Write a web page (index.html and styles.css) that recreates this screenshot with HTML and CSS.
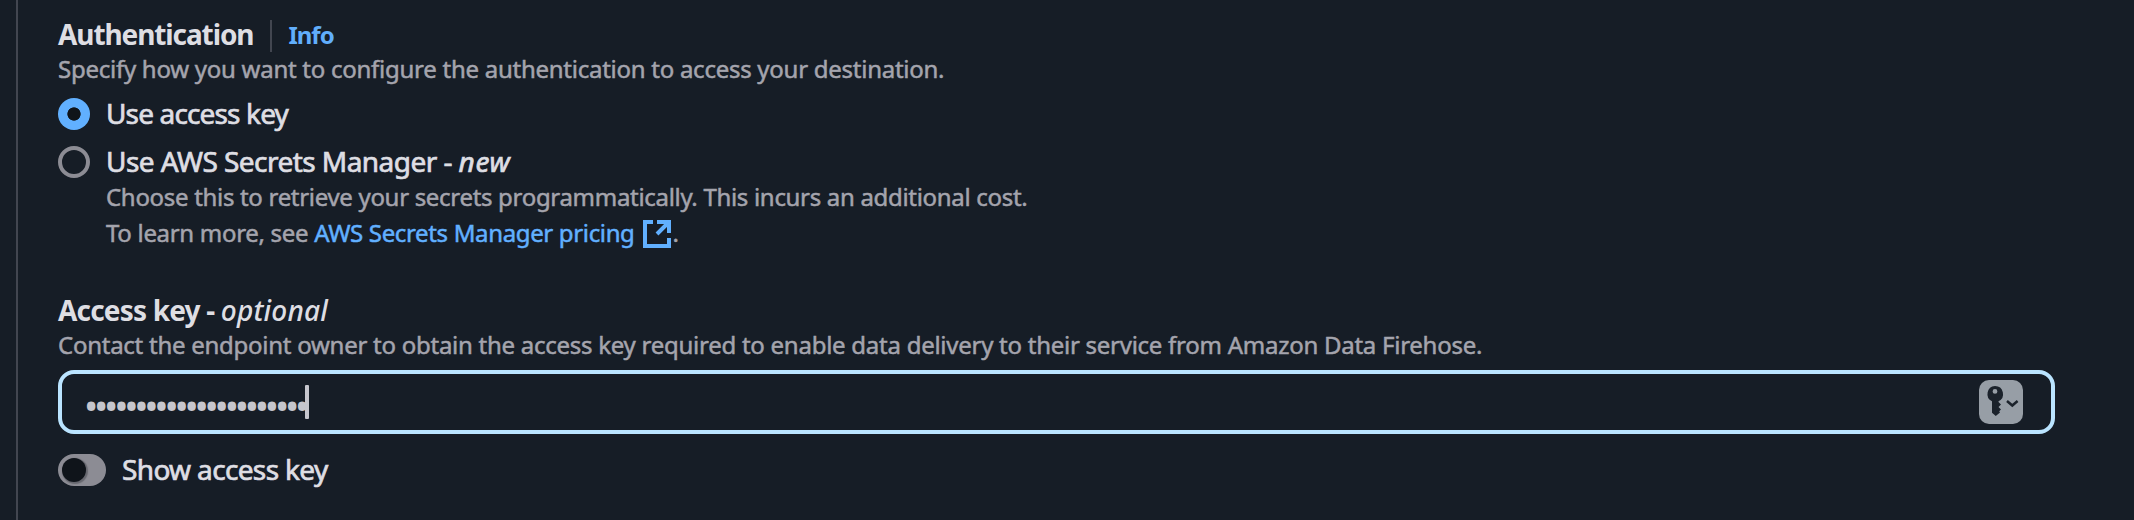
FILE: index.html
```
<!DOCTYPE html>
<html lang="en">
<head>
<meta charset="utf-8">
<title>Authentication</title>
<link rel="stylesheet" href="styles.css">
</head>
<body>
<main class="panel">
  <section class="field">
    <div class="heading">
      <span class="heading-text auth-title">Authentication</span>
      <span class="divider"></span>
      <a class="info">Info</a>
    </div>
    <div class="hint">Specify how you want to configure the authentication to access your destination.</div>
    <div class="options">
      <div class="option">
        <span class="radio radio-checked"></span>
        <span class="label short">Use access key</span>
      </div>
      <div class="option">
        <span class="radio"></span>
        <span class="label">Use AWS Secrets Manager - <em class="new">new</em></span>
      </div>
    </div>
    <div class="hint option-hint">
      <div>Choose this to retrieve your secrets programmatically. This incurs an additional cost.</div>
      <div class="learn"><span class="see">To learn more, see </span><a class="link">AWS Secrets Manager pricing</a><svg class="external" viewBox="0 0 28 28"><path d="M10 2H2v24h24v-8M14 2h12v11M25.500 2.500 14 14" fill="none" stroke="currentColor" stroke-width="4"/></svg><span>.</span></div>
    </div>
  </section>
  <section class="field key-field">
    <div class="heading"><span class="heading-text key-title">Access key - <em class="optional">optional</em></span></div>
    <div class="hint">Contact the endpoint owner to obtain the access key required to enable data delivery to their service from Amazon Data Firehose.</div>
    <div class="input">
      <span class="dots">••••••••••••••••••••••</span><span class="caret"></span>
      <span class="key-button">
        <svg class="key-icon" viewBox="0 0 44 44">
          <path fill="currentColor" fill-rule="evenodd" d="M16 6a8 8 0 0 1 3.500 15.200V22l2.500 2.500-2.500 2.500 2.500 2.500-1.800 1.800.8 1.200-4.200 3.500-3.800-3.300V21.200A8 8 0 0 1 16 6zm0 3a2.400 2.400 0 1 0 0 4.800A2.400 2.400 0 0 0 16 9z"/>
          <path d="m28 21 5.300 4.500L38.600 21" fill="none" stroke="currentColor" stroke-width="2.500"/>
        </svg>
      </span>
    </div>
    <div class="option toggle-row">
      <span class="toggle"><span class="knob"></span></span>
      <span class="label show">Show access key</span>
    </div>
  </section>
</main>
</body>
</html>
```

FILE: styles.css
```
* { box-sizing: border-box; }
body {
  margin: 0;
  height: 520px;
  overflow: hidden;
  background: #161d26;
  color: #dedee3;
  font-family: "Noto Sans", "Open Sans", sans-serif;
  font-size: 28px;
  line-height: 36px;
  white-space: nowrap;
}
.panel {
  height: 520px;
  margin-left: 16px;
  padding: 15px 79px 0 40px;
  border-left: 2px solid #424650;
}
.heading { display: flex; height: 36px; }
.heading-text { padding-top: 1px; font-weight: 700; }
.auth-title { letter-spacing: -1.100px; }
.divider { width: 2px; height: 32px; margin: 5px 16px 0 17px; background: #424650; }
.info { color: #61aefb; font-size: 24px; font-weight: 700; letter-spacing: -1px; padding-top: 2px; }
.hint {
  color: #a4a4ad;
  font-size: 24px;
  letter-spacing: -0.260px;
  -webkit-text-stroke: 0.5px currentColor;
}
.options { display: grid; gap: 12px; margin-top: 9px; }
.option { display: flex; align-items: center; height: 36px; }
.label { padding-bottom: 2px; letter-spacing: -0.550px; -webkit-text-stroke: 0.7px currentColor; }
.new { letter-spacing: 0.600px; }
.short { letter-spacing: -0.850px; }
.show { letter-spacing: -0.650px; }
.radio {
  width: 32px;
  height: 32px;
  margin-right: 16px;
  border: 4px solid #8c8c94;
  border-radius: 50%;
}
.radio-checked { padding: 0; border: 0; background: radial-gradient(circle, #0f141a 6.300px, #61b0ff 7px); }
.option-hint { margin: -1px 0 0 48px; letter-spacing: -0.310px; }
.learn { display: flex; align-items: center; height: 36px; }
.see { white-space: pre; }
.link { color: #61b0ff; letter-spacing: -0.350px; }
.external { width: 28px; height: 28px; margin: 2px 2px 0 8px; color: #61b0ff; }
.key-field { margin-top: 40px; }
.key-title { letter-spacing: -0.820px; }
.optional { font-weight: 500; letter-spacing: 0.200px; }
.input {
  display: flex;
  align-items: center;
  height: 64px;
  margin-top: 7px;
  padding: 0 28px 0 22px;
  border: 4px solid #bae4ff;
  border-radius: 16px;
}
.dots { padding-top: 5px; color: #c6c6cd; font-size: 38px; letter-spacing: -4.240px; }
.caret { width: 4px; height: 34px; border-radius: 1px; background: #c6c6cd; }
.key-button {
  width: 44px;
  height: 44px;
  margin-left: auto;
  border-radius: 10px;
  background: #979ea6;
  color: #1b222b;
}
.key-icon { display: block; width: 44px; height: 44px; }
.toggle-row { margin-top: 18px; }
.toggle {
  width: 48px;
  height: 32px;
  margin-right: 16px;
  padding: 4px;
  border-radius: 16px;
  background: #8c8c94;
}
.knob {
  display: block;
  width: 24px;
  height: 24px;
  border-radius: 50%;
  background: #0f141a;
  box-shadow: 1px 1px 1px 1px rgba(15, 20, 26, 0.300);
}
```
